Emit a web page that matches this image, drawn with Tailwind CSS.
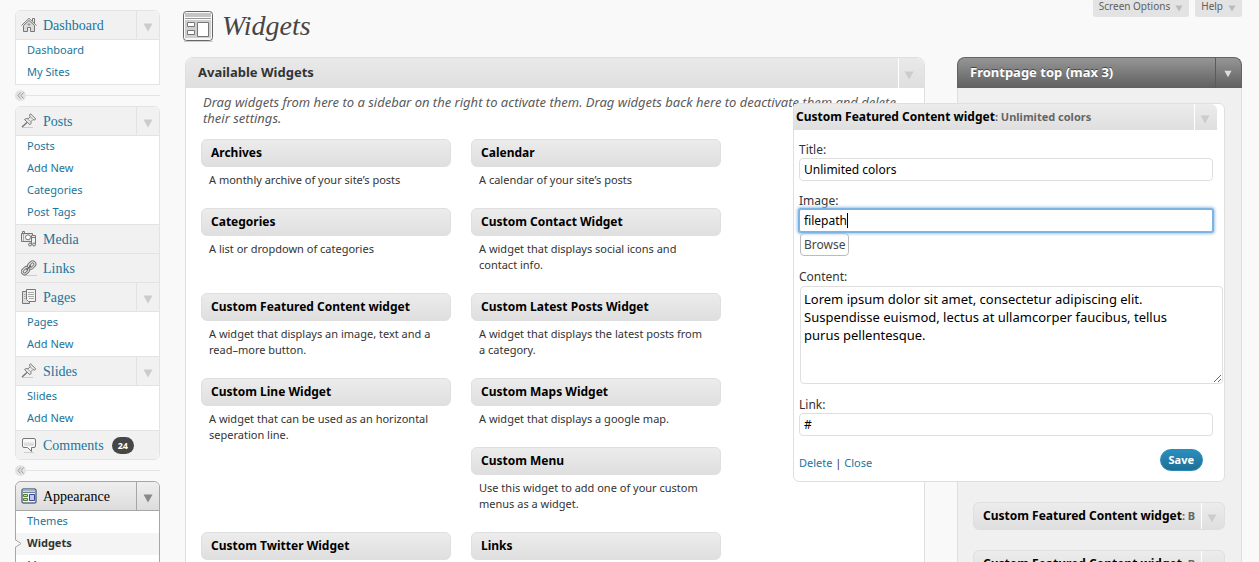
<!DOCTYPE html>
<html lang="en">
<head>
  <meta charset="UTF-8" />
  <meta name="viewport" content="width=device-width, initial-scale=1.0"/>
  <title>Widgets</title>
  <script src="https://cdn.jsdelivr.net/npm/@tailwindcss/browser@4"></script>
</head>
<body class="bg-[#f9f9f9] h-screen overflow-hidden font-['Noto_Sans',sans-serif] text-[#333]">

  <!-- shared icons -->
  <svg class="hidden" xmlns="http://www.w3.org/2000/svg">
    <symbol id="arrow" viewBox="0 0 10 9"><path d="M0.5 0.5h9L5 8.5z" fill="currentColor"/></symbol>
    <symbol id="pin" viewBox="0 0 16 16">
      <path d="M1 14.500h11" stroke="#ccc" fill="none"/>
      <path d="M1 14L6 9.500" stroke="#777" stroke-width="1.500" fill="none"/>
      <path d="M9.500 .8L14.800 6L13.500 7L12 6.500L10 8.500Q10.500 10.500 9 11.800L3.500 6.500Q5 5 7 5.800L9.200 3.700L8.500 2z" fill="#ececec" stroke="#777"/>
      <path d="M9.500 4l2 2M7 6.300l2.200 2.200" stroke="#999" fill="none"/>
    </symbol>
  </svg>

  <div class="flex items-start">

    <!-- admin menu -->
    <nav class="w-[145px] ml-[15px] mt-[10px] shrink-0 text-[11px] text-[#21759b]">
      <ul class="border border-[#e3e3e3] rounded-t-md bg-white">
        <li>
          <div class="flex h-7 rounded-t-md bg-[#f1f1f1]">
            <a href="#" class="flex flex-1 items-center gap-[6px] pl-[5px] font-['Liberation_Serif',serif] text-[14px]">
              <svg class="size-4" viewBox="0 0 16 16" fill="none" stroke="#777">
                <path d="M2.500 8.500L8 3.500l5.500 5v6h-4v-4h-3v4h-4z" fill="#dcdcdc"/>
                <path d="M11.500 4V1.500h2V6" />
                <path d="M.5 8.500L8 1.300l7.500 7.200" />
                <path d="M8 6v3M6.500 7.500h3" stroke="#999"/>
              </svg>
              Dashboard
            </a>
            <button aria-label="Toggle Dashboard" class="flex w-[23px] items-center justify-center border-l border-[#e3e3e3] pt-1 text-[#ccc]"><svg class="w-[10px] h-[9px]"><use href="#arrow"/></svg></button>
          </div>
          <ul class="border-t border-[#e3e3e3]">
            <li class="h-[22px] pl-[11px] leading-[20px]"><a href="#">Dashboard</a></li>
            <li class="h-[22px] pl-[11px] leading-[20px]"><a href="#">My Sites</a></li>
          </ul>
        </li>
      </ul>

      <div class="flex h-[21px] items-center">
        <span class="flex size-[11px] items-center justify-center rounded-full bg-[#e3e3e3]">
          <svg class="size-[7px]" viewBox="0 0 7 7" fill="none" stroke="#999"><path d="M3.500 .5L1 3.500l2.500 3M6.500 .5L4 3.500l2.500 3"/></svg>
        </span>
        <span class="h-px flex-1 bg-[#e3e3e3]"></span>
      </div>

      <ul class="border border-[#e3e3e3] rounded-md bg-white">
        <li>
          <div class="flex h-7 rounded-t-md bg-[#f1f1f1]">
            <a href="#" class="flex flex-1 items-center gap-[6px] pl-[5px] font-['Liberation_Serif',serif] text-[14px]">
              <svg class="size-4"><use href="#pin"/></svg>
              Posts
            </a>
            <button aria-label="Toggle Posts" class="flex w-[23px] items-center justify-center border-l border-[#e3e3e3] pt-1 text-[#ccc]"><svg class="w-[10px] h-[9px]"><use href="#arrow"/></svg></button>
          </div>
          <ul class="border-t border-[#e3e3e3]">
            <li class="h-[22px] pl-[11px] leading-[20px]"><a href="#">Posts</a></li>
            <li class="h-[22px] pl-[11px] leading-[20px]"><a href="#">Add New</a></li>
            <li class="h-[22px] pl-[11px] leading-[20px]"><a href="#">Categories</a></li>
            <li class="h-[22px] pl-[11px] leading-[20px]"><a href="#">Post Tags</a></li>
          </ul>
        </li>
        <li class="border-t border-[#e3e3e3]">
          <a href="#" class="flex h-7 items-center gap-[6px] bg-[#f1f1f1] pl-[5px] font-['Liberation_Serif',serif] text-[14px]">
            <svg class="size-4" viewBox="0 0 16 16" fill="none" stroke="#777">
              <path d="M3.500 2V.5h-2V2M.5 2.500h11v8H.5z" fill="#e9e9e9"/>
              <path d="M2.500 3v7" stroke="#aaa"/>
              <circle cx="7" cy="6.300" r="2.500" fill="#fff"/>
              <path d="M10.500 13.500v-9h4v9M10.500 6.500h4" fill="#f1f1f1"/>
              <circle cx="9" cy="13.500" r="1.500" fill="#ddd"/><circle cx="13" cy="13.500" r="1.500" fill="#ddd"/>
            </svg>
            Media
          </a>
        </li>
        <li class="border-t border-[#e3e3e3]">
          <a href="#" class="flex h-7 items-center gap-[6px] bg-[#f1f1f1] pl-[5px] font-['Liberation_Serif',serif] text-[14px]">
            <svg class="size-4" viewBox="0 0 16 16" fill="none">
              <path d="M3 15.500h13" stroke="#ccc"/>
              <g stroke="#777" stroke-width="3"><rect x="8.500" y="1.500" width="4.500" height="7" rx="2.200" transform="rotate(45 10.700 5)"/><rect x="2.300" y="7.300" width="4.500" height="7" rx="2.200" transform="rotate(45 4.600 10.700)"/></g>
              <g stroke="#e9e9e9"><rect x="8.500" y="1.500" width="4.500" height="7" rx="2.200" transform="rotate(45 10.700 5)"/><rect x="2.300" y="7.300" width="4.500" height="7" rx="2.200" transform="rotate(45 4.600 10.700)"/></g>
              <path d="M5.500 10L10 5.500" stroke="#666" stroke-width="1.500"/>
            </svg>
            Links
          </a>
        </li>
        <li class="border-t border-[#e3e3e3]">
          <div class="flex h-7 bg-[#f1f1f1]">
            <a href="#" class="flex flex-1 items-center gap-[6px] pl-[5px] font-['Liberation_Serif',serif] text-[14px]">
              <svg class="size-4" viewBox="0 0 16 16" fill="#f4f4f4" stroke="#777">
                <path d="M1.500 2.500h7v12h-7z" fill="#ddd"/>
                <path d="M5.500 .5h9v12h-7l-2-2z"/>
                <path d="M7 3.500h6M7 5.500h6M7 7.500h6M8 9.500h5M3 5.500h1.500M3 7.500h1.500M3 9.500h1.500" stroke="#aaa"/>
              </svg>
              Pages
            </a>
            <button aria-label="Toggle Pages" class="flex w-[23px] items-center justify-center border-l border-[#e3e3e3] pt-1 text-[#ccc]"><svg class="w-[10px] h-[9px]"><use href="#arrow"/></svg></button>
          </div>
          <ul class="border-t border-[#e3e3e3]">
            <li class="h-[22px] pl-[11px] leading-[20px]"><a href="#">Pages</a></li>
            <li class="h-[22px] pl-[11px] leading-[20px]"><a href="#">Add New</a></li>
          </ul>
        </li>
        <li class="border-t border-[#e3e3e3]">
          <div class="flex h-7 bg-[#f1f1f1]">
            <a href="#" class="flex flex-1 items-center gap-[6px] pl-[5px] font-['Liberation_Serif',serif] text-[14px]">
              <svg class="size-4"><use href="#pin"/></svg>
              Slides
            </a>
            <button aria-label="Toggle Slides" class="flex w-[23px] items-center justify-center border-l border-[#e3e3e3] pt-1 text-[#ccc]"><svg class="w-[10px] h-[9px]"><use href="#arrow"/></svg></button>
          </div>
          <ul class="border-t border-[#e3e3e3]">
            <li class="h-[22px] pl-[11px] leading-[20px]"><a href="#">Slides</a></li>
            <li class="h-[22px] pl-[11px] leading-[20px]"><a href="#">Add New</a></li>
          </ul>
        </li>
        <li class="border-t border-[#e3e3e3]">
          <a href="#" class="flex h-7 items-center gap-[6px] rounded-b-md bg-[#f1f1f1] pl-[5px] font-['Liberation_Serif',serif] text-[14px]">
            <svg class="size-4" viewBox="0 0 16 16" fill="none">
              <path d="M3 15.500h10" stroke="#ccc"/>
              <path d="M3 1.500h10q1.500 0 1.500 1.500v6q0 1.500-1.500 1.500h-2.500v4l-4-4H3Q1.500 10.500 1.500 9V3Q1.500 1.500 3 1.500z" fill="#f8f8f8" stroke="#777"/>
              <path d="M3 5.500h10v3.500H3z" fill="#ddd"/>
            </svg>
            Comments
            <span class="ml-[2px] rounded-full bg-[#464646] px-[6px] font-['Noto_Sans',sans-serif] text-[9px] leading-[17px] font-bold text-white">24</span>
          </a>
        </li>
      </ul>

      <div class="flex h-[21px] items-center">
        <span class="flex size-[11px] items-center justify-center rounded-full bg-[#e3e3e3]">
          <svg class="size-[7px]" viewBox="0 0 7 7" fill="none" stroke="#999"><path d="M3.500 .5L1 3.500l2.500 3M6.500 .5L4 3.500l2.500 3"/></svg>
        </span>
        <span class="h-px flex-1 bg-[#e3e3e3]"></span>
      </div>

      <!-- current section -->
      <ul class="border border-[#a6a6a6] rounded-md bg-white">
        <li>
          <div class="flex h-7 rounded-t-md bg-linear-to-b from-[#efefef] to-[#dcdcdc]">
            <a href="#" class="flex flex-1 items-center gap-[6px] pl-[5px] font-['Liberation_Serif',serif] text-[14px] text-black">
              <svg class="size-4" viewBox="0 0 16 16" fill="none">
                <rect x="1" y="1" width="14" height="14" rx="1" fill="#eef3f8" stroke="#1f2d4d"/>
                <path d="M2 2.500h12" stroke="#9dbccc" stroke-width="2"/>
                <path d="M2 4.500h12" stroke="#6d8299"/>
                <path d="M2.500 6.500h4v2h-4zM2.500 10.500h4v2h-4z" fill="#c6e48b" stroke="#4f7f2a"/>
                <path d="M8.500 6.500h5v6h-5z" fill="#c3c8f2" stroke="#3c4696"/>
              </svg>
              Appearance
            </a>
            <button aria-label="Toggle Appearance" class="flex w-[23px] items-center justify-center border-l border-[#a6a6a6] pt-1 text-[#888]"><svg class="w-[10px] h-[9px]"><use href="#arrow"/></svg></button>
          </div>
          <ul class="border-t border-[#a6a6a6]">
            <li class="h-[22px] pl-[11px] leading-[20px]"><a href="#">Themes</a></li>
            <li class="relative h-[22px] bg-[#f4f4f4] pl-[11px] leading-[20px]">
              <svg class="absolute -left-px top-[6px] w-[7px] h-[9px]" viewBox="0 0 7 9"><path d="M0 .5L6 4.500L0 8.500" fill="#f9f9f9" stroke="#a6a6a6"/></svg>
              <a href="#" class="font-bold text-[#333]">Widgets</a>
            </li>
            <li class="h-[22px] pl-[11px] leading-[20px]"><a href="#">Menus</a></li>
          </ul>
        </li>
      </ul>
    </nav>

    <main class="ml-[23px] mr-[17px] min-w-0 flex-1">
      <header class="flex h-[57px] items-start">
        <svg class="mt-[11px] w-[31px] h-[31px]" viewBox="0 0 31 31" fill="none">
          <path d="M1 30.500h29" stroke="#ccc"/>
          <rect x=".5" y=".5" width="29" height="29" rx="3" fill="#f8f8f8" stroke="#666"/>
          <path d="M2 2h26v4H2z" fill="#c4c4c4"/>
          <path d="M2 7.500h26" stroke="#999"/>
          <path d="M2 9h26v18H2z" fill="#cfcfcf"/>
          <path d="M4.500 11.500h7v4h-7zM4.500 19.500h7v4h-7zM14.500 11.500h11v14h-11z" fill="#fff" stroke="#777"/>
        </svg>
        <h1 class="ml-2 mt-[10px] flex-1 font-['Liberation_Serif',serif] text-[28px] leading-[32px] italic text-[#464646]">Widgets</h1>
        <div class="flex gap-[6px] text-[10px] leading-[17px] text-[#606060]">
          <button class="flex h-[17px] items-center gap-[5px] rounded-b-[3px] bg-[#e3e3e3] px-[6px] pb-1">Screen Options <svg class="mt-1 w-2 h-[7px] text-[#bbb]"><use href="#arrow"/></svg></button>
          <button class="flex h-[17px] items-center gap-[5px] rounded-b-[3px] bg-[#e3e3e3] px-[6px] pb-1">Help <svg class="mt-1 w-2 h-[7px] text-[#bbb]"><use href="#arrow"/></svg></button>
        </div>
      </header>

      <div class="flex pl-[2px]">
        <!-- available widgets -->
        <section class="min-w-0 flex-1 rounded-t-lg border border-[#dfdfdf] bg-white">
          <div class="flex h-[30px] rounded-t-lg bg-linear-to-b from-[#e9e9e9] to-[#dfdfdf]">
            <h2 class="flex-1 pl-3 text-[13px] leading-[29px] font-bold">Available Widgets</h2>
            <button aria-label="Toggle Available Widgets" class="flex w-[26px] items-center justify-center border-l border-white pr-[5px] pt-1 text-[#ccc]"><svg class="w-[10px] h-[9px]"><use href="#arrow"/></svg></button>
          </div>
          <p class="pt-[6px] pr-[14px] pl-[17px] text-[13px] leading-[16px] italic text-[#5a5a5a]">Drag widgets from here to a sidebar on the right to activate them. Drag widgets back here to deactivate them and delete<br>their settings.</p>

          <div class="mt-[13px] ml-[15px] grid grid-cols-[250px_250px] gap-x-5 text-[11px] leading-[16px]">
            <div class="pb-5">
              <h4 class="mb-[5px] h-7 rounded-md border border-[#dfdfdf] bg-linear-to-b from-[#ececec] to-[#dfdfdf] pl-[9px] text-[12px] leading-[26px] font-bold text-black">Archives</h4>
              <p class="px-2">A monthly archive of your site’s posts</p>
            </div>
            <div class="pb-5">
              <h4 class="mb-[5px] h-7 rounded-md border border-[#dfdfdf] bg-linear-to-b from-[#ececec] to-[#dfdfdf] pl-[9px] text-[12px] leading-[26px] font-bold text-black">Calendar</h4>
              <p class="px-2">A calendar of your site’s posts</p>
            </div>
            <div class="pb-5">
              <h4 class="mb-[5px] h-7 rounded-md border border-[#dfdfdf] bg-linear-to-b from-[#ececec] to-[#dfdfdf] pl-[9px] text-[12px] leading-[26px] font-bold text-black">Categories</h4>
              <p class="px-2">A list or dropdown of categories</p>
            </div>
            <div class="pb-5">
              <h4 class="mb-[5px] h-7 rounded-md border border-[#dfdfdf] bg-linear-to-b from-[#ececec] to-[#dfdfdf] pl-[9px] text-[12px] leading-[26px] font-bold text-black">Custom Contact Widget</h4>
              <p class="px-2">A widget that displays social icons and<br>contact info.</p>
            </div>
            <div class="pb-5">
              <h4 class="mb-[5px] h-7 rounded-md border border-[#dfdfdf] bg-linear-to-b from-[#ececec] to-[#dfdfdf] pl-[9px] text-[12px] leading-[26px] font-bold text-black">Custom Featured Content widget</h4>
              <p class="px-2">A widget that displays an image, text and a<br>read–more button.</p>
            </div>
            <div class="pb-5">
              <h4 class="mb-[5px] h-7 rounded-md border border-[#dfdfdf] bg-linear-to-b from-[#ececec] to-[#dfdfdf] pl-[9px] text-[12px] leading-[26px] font-bold text-black">Custom Latest Posts Widget</h4>
              <p class="px-2">A widget that displays the latest posts from<br>a category.</p>
            </div>
            <div class="row-span-2 pb-5">
              <h4 class="mb-[5px] h-7 rounded-md border border-[#dfdfdf] bg-linear-to-b from-[#ececec] to-[#dfdfdf] pl-[9px] text-[12px] leading-[26px] font-bold text-black">Custom Line Widget</h4>
              <p class="px-2">A widget that can be used as an horizontal<br>seperation line.</p>
            </div>
            <div class="pb-5">
              <h4 class="mb-[5px] h-7 rounded-md border border-[#dfdfdf] bg-linear-to-b from-[#ececec] to-[#dfdfdf] pl-[9px] text-[12px] leading-[26px] font-bold text-black">Custom Maps Widget</h4>
              <p class="px-2">A widget that displays a google map.</p>
            </div>
            <div class="pb-5">
              <h4 class="mb-[5px] h-7 rounded-md border border-[#dfdfdf] bg-linear-to-b from-[#ececec] to-[#dfdfdf] pl-[9px] text-[12px] leading-[26px] font-bold text-black">Custom Menu</h4>
              <p class="px-2">Use this widget to add one of your custom<br>menus as a widget.</p>
            </div>
            <div class="pb-5">
              <h4 class="mb-[5px] h-7 rounded-md border border-[#dfdfdf] bg-linear-to-b from-[#ececec] to-[#dfdfdf] pl-[9px] text-[12px] leading-[26px] font-bold text-black">Custom Twitter Widget</h4>
            </div>
            <div class="pb-5">
              <h4 class="mb-[5px] h-7 rounded-md border border-[#dfdfdf] bg-linear-to-b from-[#ececec] to-[#dfdfdf] pl-[9px] text-[12px] leading-[26px] font-bold text-black">Links</h4>
            </div>
          </div>
        </section>

        <!-- sidebar area -->
        <section class="relative ml-8 w-[285px] shrink-0">
          <div class="flex h-[31px] rounded-t-lg border border-b-0 border-[#636363] bg-linear-to-b from-[#969696] to-[#606060] text-white">
            <h2 class="flex-1 pl-3 text-[13px] leading-[29px] font-bold text-shadow-[0_-1px_0_#444]">Frontpage top (max 3)</h2>
            <button aria-label="Toggle Frontpage top" class="flex w-[26px] items-center justify-center border-l border-[#5a5a5a] pr-[2px] pt-[2px] text-[#ddd]"><svg class="w-2 h-[8px]"><use href="#arrow"/></svg></button>
          </div>
          <div class="flex flex-col gap-5 border-x border-[#dfdfdf] bg-[#f0f0f0] pr-4 pl-[15px] pt-[414px] pb-10">
            <div class="flex h-7 rounded-md border border-[#dfdfdf] bg-linear-to-b from-[#ececec] to-[#dfdfdf]">
              <h4 class="min-w-0 flex-1 overflow-hidden pl-[9px] text-[12px] leading-[26px] font-bold whitespace-nowrap text-black">Custom Featured Content widget<span class="text-[11px] text-[#666]">: B</span></h4>
              <button aria-label="Edit widget" class="flex w-[23px] items-center justify-center border-l border-white pr-[2px] pt-1 text-[#ccc]"><svg class="w-[10px] h-[9px]"><use href="#arrow"/></svg></button>
            </div>
            <div class="flex h-7 rounded-md border border-[#dfdfdf] bg-linear-to-b from-[#ececec] to-[#dfdfdf]">
              <h4 class="min-w-0 flex-1 overflow-hidden pl-[9px] text-[12px] leading-[26px] font-bold whitespace-nowrap text-black">Custom Featured Content widget<span class="text-[11px] text-[#666]">: B</span></h4>
              <button aria-label="Edit widget" class="flex w-[23px] items-center justify-center border-l border-white pr-[2px] pt-1 text-[#ccc]"><svg class="w-[10px] h-[9px]"><use href="#arrow"/></svg></button>
            </div>
          </div>

          <!-- opened widget form, wider than the column it sits in -->
          <form class="absolute top-[46px] right-[17px] w-[432px] rounded-md border border-[#dfdfdf] bg-white text-[12px] leading-[16px]">
            <div class="mr-[7px] flex h-[26px] rounded-tr-md bg-linear-to-b from-[#ececec] to-[#dfdfdf]">
              <h4 class="flex-1 pl-[2px] text-[12px] leading-[26px] font-bold text-black">Custom Featured Content widget<span class="text-[11px] text-[#666]">: Unlimited colors</span></h4>
              <button type="button" aria-label="Close widget" class="flex w-[23px] items-center justify-center border-l border-white pr-[2px] pt-1 text-[#ccc]"><svg class="w-[10px] h-[9px]"><use href="#arrow"/></svg></button>
            </div>
            <div class="pt-3 pl-[5px]">
              <label for="title" class="block">Title:</label>
              <input id="title" type="text" value="Unlimited colors" class="block h-[23px] w-[414px] rounded border border-[#dfdfdf] bg-white px-1 text-black"/>

              <label for="image" class="mt-3 block">Image:</label>
              <div class="relative">
                <input id="image" type="text" value="filepath" class="block h-[23px] w-[414px] rounded-xs border border-[#7eb4e2] bg-white px-1 text-black shadow-[0_0_0_1px_#7eb4e2,0_0_3px_2px_#9cc6ea]"/>
                <span class="absolute top-1 left-[48px] h-[15px] w-px bg-black"></span>
              </div>
              <button type="button" class="mt-px ml-px block h-[23px] rounded border border-[#bbb] bg-white px-[3px] text-[#464646]">Browse</button>

              <label for="content" class="mt-[13px] block">Content:</label>
              <textarea id="content" class="mt-px ml-px block h-[98px] w-[423px] resize rounded border border-[#dfdfdf] bg-white px-[3px] py-[3px] text-[13px] leading-[18px] text-black">Lorem ipsum dolor sit amet, consectetur adipiscing elit.
Suspendisse euismod, lectus at ullamcorper faucibus, tellus
purus pellentesque.</textarea>

              <label for="link" class="mt-[13px] block">Link:</label>
              <input id="link" type="text" value="#" class="block h-[23px] w-[414px] rounded border border-[#dfdfdf] bg-white px-1 text-black"/>

              <div class="mt-[13px] mr-[21px] mb-[10px] flex items-end justify-between">
                <p class="text-[11px]"><a href="#" class="text-[#21759b]">Delete</a> | <a href="#" class="text-[#21759b]">Close</a></p>
                <button type="submit" class="h-[22px] rounded-full border border-[#298cba] bg-linear-to-b from-[#2a8fbe] to-[#1f6f96] px-2 text-[11px] font-bold text-white">Save</button>
              </div>
            </div>
          </form>
        </section>
      </div>
    </main>
  </div>

</body>
</html>
